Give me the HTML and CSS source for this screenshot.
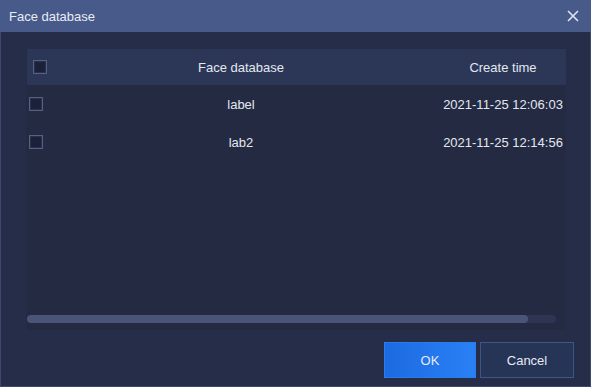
FILE: index.html
```html
<!DOCTYPE html>
<html lang="en">
<head>
    <meta charset="UTF-8">
    <title>Face database</title>
    <link rel="stylesheet" href="styles.css">
</head>
<body>
    <div class="dialog">
        <!-- Title bar -->
        <div class="dialog-title">
            <span>Face database</span>
            <svg class="close" width="12" height="12" viewBox="0 0 12 12">
                <path d="M1 1L11 11M11 1L1 11" stroke="#dfe4f0" stroke-width="1.6" fill="none"/>
            </svg>
        </div>

        <div class="dialog-body">
            <!-- Table panel -->
            <div class="panel">
                <div class="table-wrap">
                    <table class="grid">
                        <colgroup>
                            <col class="col-check">
                            <col class="col-name">
                            <col class="col-time">
                        </colgroup>
                        <thead>
                            <tr>
                                <th class="check-head"><span class="checkbox"></span></th>
                                <th>Face database</th>
                                <th>Create time</th>
                            </tr>
                        </thead>
                        <tbody>
                            <tr>
                                <td class="check-cell"><span class="checkbox"></span></td>
                                <td>label</td>
                                <td>2021-11-25 12:06:03</td>
                            </tr>
                            <tr>
                                <td class="check-cell"><span class="checkbox"></span></td>
                                <td>lab2</td>
                                <td>2021-11-25 12:14:56</td>
                            </tr>
                        </tbody>
                    </table>
                </div>
                <div class="scrollbar">
                    <div class="scroll-thumb"></div>
                </div>
            </div>

            <!-- Buttons -->
            <div class="dialog-footer">
                <button class="btn btn-primary">OK</button>
                <button class="btn btn-default">Cancel</button>
            </div>
        </div>
    </div>
</body>
</html>
```

FILE: styles.css
```css
* {
    margin: 0;
    padding: 0;
    box-sizing: border-box;
}

body {
    font-family: 'Liberation Sans', Arial, sans-serif;
    background: #252c47;
    width: 591px;
    height: 387px;
    overflow: hidden;
}

.dialog {
    width: 591px;
    height: 387px;
    display: flex;
    flex-direction: column;
    background: #262d48;
    border: 1px solid #3d4970;
    border-top: none;
}

/* Title bar */
.dialog-title {
    height: 32px;
    margin: 0 -1px;
    background: #475a89;
    display: flex;
    align-items: center;
    justify-content: space-between;
    padding: 0 12px 0 9px;
    color: #e8ecf6;
    font-size: 13px;
}

.close {
    width: 12px;
    height: 12px;
}

.dialog-body {
    flex: 1;
    padding: 17px 24px 0 25px;
    display: flex;
    flex-direction: column;
}

/* Table panel */
.panel {
    height: 281px;
    background: #232a42;
    display: flex;
    flex-direction: column;
    padding-left: 1px;
}

.table-wrap {
    flex: 1;
    overflow: hidden;
}

.grid {
    width: 569px;
    table-layout: fixed;
    border-collapse: collapse;
    color: #e3e7f0;
    font-size: 13px;
}

.col-check {
    width: 45px;
}

.col-name {
    width: 338px;
}

.col-time {
    width: 186px;
}

.grid th {
    height: 36px;
    background: #2c3758;
    font-weight: normal;
    text-align: center;
}

.grid td {
    height: 38px;
    text-align: center;
}

.grid th.check-head {
    text-align: left;
    padding-left: 6px;
}

.grid td.check-cell {
    text-align: left;
    padding-left: 2px;
}

.checkbox {
    display: block;
    width: 14px;
    height: 14px;
    border: 1px solid #56607f;
    background: #1b2139;
    box-shadow: inset 0 0 0 1px #2a3150;
}

.scrollbar {
    height: 8px;
    width: 529px;
    margin-bottom: 7px;
    background: #2d3553;
    border-radius: 4px;
}

.scroll-thumb {
    width: 501px;
    height: 8px;
    background: #4a5378;
    border-radius: 4px;
}

/* Footer buttons */
.dialog-footer {
    display: flex;
    justify-content: flex-end;
    gap: 4px;
    margin-top: 12px;
    margin-right: -8px;
}

.btn {
    height: 36px;
    font-family: inherit;
    font-size: 13px;
    color: #e6ebf5;
    border: 1px solid transparent;
    cursor: pointer;
}

.btn-primary {
    width: 92px;
    background: linear-gradient(90deg, #1c6ae0, #2a80f5);
    border-color: #2a7bf0;
}

.btn-default {
    width: 94px;
    background: #263456;
    border-color: #3b5688;
}
```
